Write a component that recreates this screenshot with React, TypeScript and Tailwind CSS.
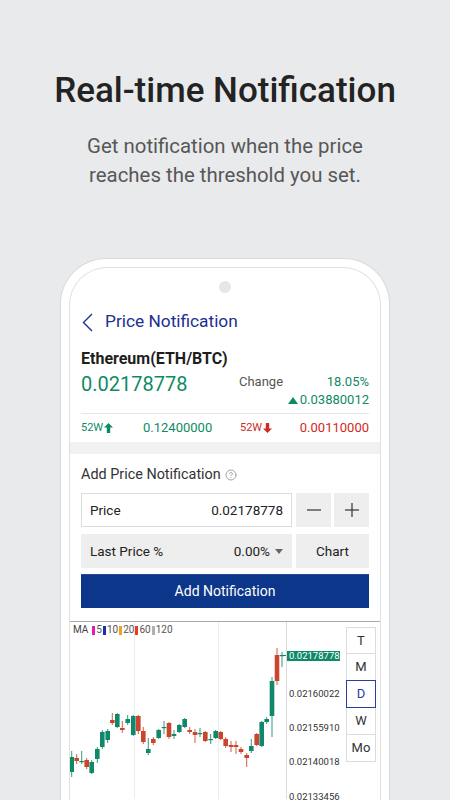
import React from 'react'

// candle: [x, bodyTop, bodyBottom, wickTop, wickBottom, up]
const CANDLES: [number, number, number, number, number, boolean][] = [
  [71.7, 758, 773, 752, 778, true],
  [76.7, 759, 762, 755, 765, false],
  [81.7, 762, 763, 752, 765, true],
  [86.7, 761, 768, 759, 770, false],
  [91.7, 763, 774, 761, 775, true],
  [97.3, 750, 760, 748, 764, true],
  [102.3, 733, 748, 731, 750, true],
  [107.7, 732, 741, 730, 744, true],
  [112.3, 721, 724, 714, 726, false],
  [117.3, 715, 728, 714, 729, true],
  [122.3, 729, 731, 722, 734, false],
  [127.7, 720, 724, 716, 726, true],
  [133.3, 717, 736, 716, 737, true],
  [138.3, 717, 732, 716, 735, false],
  [143.3, 732, 743, 728, 745, false],
  [148.3, 750, 754, 739, 756, true],
  [153.3, 740, 744, 738, 746, false],
  [158.7, 731, 739, 730, 740, true],
  [164, 728, 729, 722, 735, true],
  [169, 724, 738, 723, 740, false],
  [174, 735, 737, 731, 740, true],
  [179.3, 726, 733, 725, 734, true],
  [184.7, 720, 728, 719, 729, true],
  [189.7, 731, 733, 728, 735, false],
  [195, 733, 736, 730, 744, false],
  [200, 734, 735, 729, 738, true],
  [205.3, 733, 742, 732, 743, false],
  [210.7, 740, 741, 735, 745, true],
  [215.7, 732, 739, 731, 740, true],
  [220.7, 733, 740, 732, 741, false],
  [225.7, 740, 747, 738, 749, false],
  [231, 746, 748, 742, 753, false],
  [236, 746, 748, 742, 755, false],
  [241, 750, 753, 748, 755, false],
  [246.7, 756, 759, 754, 768, false],
  [251.3, 747, 752, 740, 754, true],
  [256.7, 735, 746, 734, 747, false],
  [261.7, 723, 747, 722, 748, true],
  [266.7, 720, 723, 718, 725, true],
  [272, 682, 717, 678, 738, true],
  [277, 656, 682, 649, 686, false],
  [282, 656, 657, 653, 668, true],
]

const MA = [
  { c: '#e21bb5', l: '5' },
  { c: '#1c2fb0', l: '10' },
  { c: '#f5a11f', l: '20' },
  { c: '#ee3a1f', l: '60' },
  { c: '#b0b0b0', l: '120' },
]

function ArrowUp({ color }: { color: string }) {
  return (
    <svg width="9" height="10" viewBox="0 0 9 10">
      <path d="M4.5 0 L9 4.5 H6.2 V10 H2.8 V4.5 H0 Z" fill={color} />
    </svg>
  )
}

function ArrowDown({ color }: { color: string }) {
  return (
    <svg width="9" height="10" viewBox="0 0 9 10">
      <path d="M4.5 10 L9 5.5 H6.2 V0 H2.8 V5.5 H0 Z" fill={color} />
    </svg>
  )
}

function CandleChart() {
  return (
    <svg width="217" height="177" viewBox="70 623 217 177" className="block shrink-0">
      <line x1="134.5" y1="623" x2="134.5" y2="800" stroke="#ececec" />
      <line x1="218.5" y1="623" x2="218.5" y2="800" stroke="#ececec" />
      <line x1="286.5" y1="623" x2="286.5" y2="800" stroke="#dcdcdc" />
      {CANDLES.map(([x, bt, bb, wt, wb, up], i) => {
        const col = up ? '#10896a' : '#c9452d'
        const h = Math.max(bb - bt, 1.2)
        return (
          <g key={i}>
            <line x1={x} y1={wt} x2={x} y2={wb} stroke={col} strokeWidth="1" opacity="0.85" />
            <rect x={x - 2.3} y={bt} width="4.6" height={h} fill={col} />
          </g>
        )
      })}
      <line x1="282" y1="656.5" x2="286" y2="656.5" stroke="#10896a" />
    </svg>
  )
}

export default function App() {
  return (
    <div className="flex h-[800px] flex-col items-center overflow-hidden bg-[#e9eaec] font-['Roboto',sans-serif]">
      <h1 className="mt-[69px] text-[35px] font-medium leading-[44px] text-[#232323]">Real-time Notification</h1>
      <p className="mt-[19px] text-center text-[20.4px] leading-[29px] text-[#575757]">
        Get notification when the price
        <br />
        reaches the threshold you set.
      </p>

      {/* Phone frame */}
      <div className="mt-[68px] flex w-[330px] flex-1 flex-col rounded-t-[46px] border border-b-0 border-[#d9d9d9] bg-white px-[8px] pt-[8px]">
        <div className="flex flex-1 flex-col rounded-t-[38px] border border-b-0 border-[#dfdfdf] bg-white">
          <div className="mx-auto mt-[13px] h-[12px] w-[12px] rounded-full bg-[#e6e6e6]" />

          <div className="mt-[13px] flex h-[32px] items-center pl-[12px]">
            <svg width="11" height="19" viewBox="0 0 11 19">
              <polyline points="10,1 1.5,9.5 10,18" fill="none" stroke="#1d2f8f" strokeWidth="1.4" />
            </svg>
            <span className="ml-[12px] text-[17.3px] text-[#1d2f8f]">Price Notification</span>
          </div>

          <div className="px-[11px]">
            <div className="mt-[11px] h-[20px] text-[16px] font-bold leading-[20px] text-[#1e1e1e]">Ethereum(ETH/BTC)</div>
            <div className="mt-[3px] flex justify-between">
              <div className="text-[20px] leading-[24px] text-[#0f8b64]">0.02178778</div>
              <div className="mt-[1px] w-[130px] text-[13px] leading-[18px]">
                <div className="flex justify-between">
                  <span className="text-[#555]">Change</span>
                  <span className="text-[#0f8b64]">18.05%</span>
                </div>
                <div className="flex items-center justify-end gap-[2px] text-[#0f8b64]">
                  <svg width="10" height="7" viewBox="0 0 10 7">
                    <path d="M5 0 L10 7 H0 Z" fill="#0f8b64" />
                  </svg>
                  <span>0.03880012</span>
                </div>
              </div>
            </div>
            <div className="mt-[4px] h-px bg-[#e6e6e6]" />
            <div className="flex h-[28px] items-center text-[13px]">
              <div className="flex w-[159px] items-center">
                <div className="flex w-[62px] items-center gap-[1px] text-[11px] text-[#0f8b64]">
                  52W <ArrowUp color="#0f8b64" />
                </div>
                <span className="text-[#0f8b64]">0.12400000</span>
              </div>
              <div className="flex flex-1 items-center justify-between">
                <div className="flex items-center gap-[1px] text-[11px] text-[#d12a22]">
                  52W <ArrowDown color="#d12a22" />
                </div>
                <span className="text-[#d12a22]">0.00110000</span>
              </div>
            </div>
          </div>

          <div className="h-[12px] bg-[#f1f1f1]" />

          <div className="px-[11px]">
            <div className="mt-[11px] flex h-[20px] items-center gap-[4px] text-[14.4px] text-[#333]">
              Add Price Notification
              <svg width="12" height="12" viewBox="0 0 24 24" fill="none" stroke="#9a9a9a" strokeWidth="1.8" strokeLinecap="round">
                <circle cx="12" cy="12" r="10" />
                <path d="M9.09 9a3 3 0 0 1 5.83 1c0 2-3 3-3 3" />
                <path d="M12 17h.01" />
              </svg>
            </div>

            <div className="mt-[8px] flex h-[34px]">
              <div className="flex flex-1 items-center justify-between border border-[#dcdcdc] px-[8px] text-[13.5px] text-[#222]">
                <span>Price</span>
                <span>0.02178778</span>
              </div>
              <div className="ml-[4px] flex w-[35px] items-center justify-center bg-[#eeeeee]">
                <svg width="16" height="16" viewBox="0 0 16 16">
                  <line x1="1" y1="8" x2="15" y2="8" stroke="#333" strokeWidth="1.2" />
                </svg>
              </div>
              <div className="ml-[3px] flex w-[35px] items-center justify-center bg-[#eeeeee]">
                <svg width="16" height="16" viewBox="0 0 16 16">
                  <line x1="1" y1="8" x2="15" y2="8" stroke="#333" strokeWidth="1.2" />
                  <line x1="8" y1="1" x2="8" y2="15" stroke="#333" strokeWidth="1.2" />
                </svg>
              </div>
            </div>

            <div className="mt-[7px] flex h-[34px] text-[13.5px] text-[#222]">
              <div className="flex flex-1 items-center justify-between bg-[#eeeeee] pl-[9px] pr-[9px]">
                <span>Last Price %</span>
                <span className="flex items-center gap-[5px]">
                  0.00%
                  <svg width="8" height="5" viewBox="0 0 8 5">
                    <path d="M0 0 H8 L4 5 Z" fill="#666" />
                  </svg>
                </span>
              </div>
              <div className="ml-[4px] flex w-[73px] items-center justify-center bg-[#eeeeee]">Chart</div>
            </div>

            <button className="mt-[6px] flex h-[34px] w-full items-center justify-center border-t border-[#2b4a95] bg-[#0c3689] text-[14px] text-white">
              Add Notification
            </button>
          </div>

          <div className="mt-[13px] h-px bg-[#a9a9a9]" />

          {/* Chart */}
          <div className="relative flex">
            <div className="absolute left-[3px] top-[2px] flex items-center text-[10px] leading-[12px] text-[#444]">
              <span className="mr-[4px]">MA</span>
              {MA.map(m => (
                <span key={m.l} className="flex items-center">
                  <span className="mr-[1px] inline-block h-[9px] w-[3px]" style={{ backgroundColor: m.c }} />
                  <span className="mr-[1px] text-[#555]">{m.l}</span>
                </span>
              ))}
            </div>
            <CandleChart />
            <div className="flex w-[57px] flex-col text-[9.5px] leading-[10px] text-[#333]">
              <div className="mt-[29px] w-[53px] bg-[#10896a] pl-[2px] text-white">0.02178778</div>
              <div className="mt-[28px] pl-[2px]">0.02160022</div>
              <div className="mt-[24px] pl-[2px]">0.02155910</div>
              <div className="mt-[24px] pl-[2px]">0.02140018</div>
              <div className="mt-[25px] pl-[2px]">0.02133456</div>
            </div>
            <div className="ml-[2px] mt-[5px] flex w-[30px] flex-col text-[13px] text-[#333]">
              {['T', 'M', 'D', 'W', 'Mo'].map((p, i) => (
                <div
                  key={p}
                  className={
                    p === 'D'
                      ? 'relative z-10 -mt-px flex h-[28px] items-center justify-center border border-[#2a3f9a] text-[#2a3f9a]'
                      : i === 0
                        ? 'flex h-[27px] items-center justify-center border border-[#dcdcdc]'
                        : '-mt-px flex h-[28px] items-center justify-center border border-[#dcdcdc]'
                  }
                >
                  {p}
                </div>
              ))}
            </div>
          </div>
        </div>
      </div>
    </div>
  )
}
